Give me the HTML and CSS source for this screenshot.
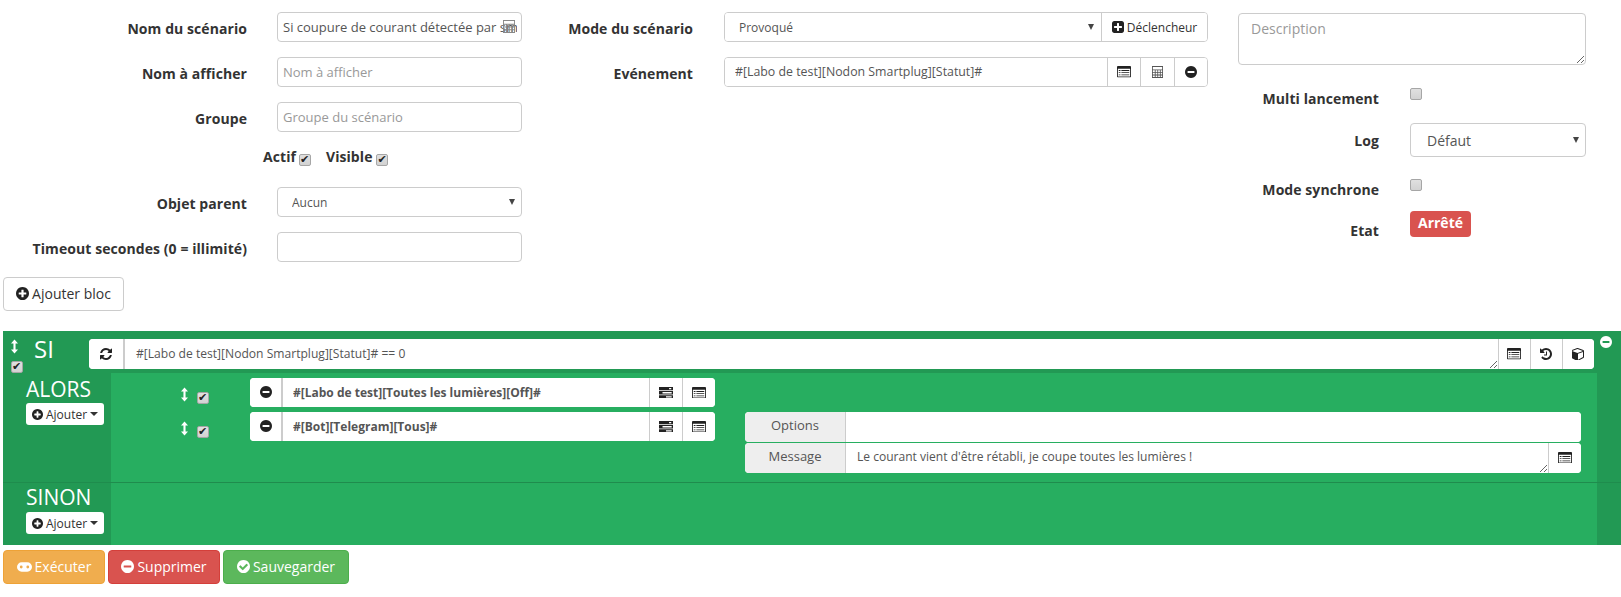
FILE: index.html
```html
<!DOCTYPE html>
<html lang="fr">
<head>
<meta charset="utf-8">
<title>Scénario</title>
<link rel="stylesheet" href="styles.css">
</head>
<body>
<svg class="sprite" xmlns="http://www.w3.org/2000/svg">
  <symbol id="i-plus" viewBox="128 128 1536 1536"><path d="M1344 960v-128q0-26-19-45t-45-19h-256v-256q0-26-19-45t-45-19h-128q-26 0-45 19t-19 45v256h-256q-26 0-45 19t-19 45v128q0 26 19 45t45 19h256v256q0 26 19 45t45 19h128q26 0 45-19t19-45v-256h256q26 0 45-19t19-45zm320-64q0 209-103 385.500t-279.500 279.500-385.500 103-385.500-103-279.500-279.500-103-385.500 103-385.500 279.500-279.500 385.500-103 385.500 103 279.500 279.500 103 385.500z"/></symbol>
  <symbol id="i-minus" viewBox="128 128 1536 1536"><path d="M1344 960v-128q0-26-19-45t-45-19h-768q-26 0-45 19t-19 45v128q0 26 19 45t45 19h768q26 0 45-19t19-45zm320-64q0 209-103 385.500t-279.500 279.500-385.500 103-385.500-103-279.500-279.500-103-385.500 103-385.500 279.500-279.500 385.500-103 385.500 103 279.500 279.500 103 385.500z"/></symbol>
  <symbol id="i-check" viewBox="128 128 1536 1536"><path d="M1412 734q0-28-18-46l-91-90q-19-19-45-19t-45 19l-408 407-226-226q-19-19-45-19t-45 19l-91 90q-18 18-18 46 0 27 18 45l362 362q19 19 45 19 27 0 46-19l543-543q18-18 18-45zm252 162q0 209-103 385.500t-279.500 279.500-385.500 103-385.500-103-279.500-279.500-103-385.500 103-385.500 279.500-279.500 385.500-103 385.500 103 279.500 279.500 103 385.500z"/></symbol>
  <symbol id="i-square" viewBox="128 128 1536 1536"><path d="M1408 960v-128q0-26-19-45t-45-19h-320v-320q0-26-19-45t-45-19h-128q-26 0-45 19t-19 45v320h-320q-26 0-45 19t-19 45v128q0 26 19 45t45 19h320v320q0 26 19 45t45 19h128q26 0 45-19t19-45v-320h320q26 0 45-19t19-45zm256-544v960q0 119-84.500 203.500t-203.500 84.500h-960q-119 0-203.500-84.500t-84.500-203.500v-960q0-119 84.500-203.500t203.500-84.500h960q119 0 203.500 84.500t84.500 203.500z"/></symbol>
  <symbol id="i-refresh" viewBox="128 128 1536 1536"><path d="M1639 1056q0 5-1 7-64 268-268 434.500t-478 166.500q-146 0-282.500-55t-243.500-157l-129 129q-19 19-45 19t-45-19-19-45v-448q0-26 19-45t45-19h448q26 0 45 19t19 45-19 45l-137 137q71 66 161 102t187 36q134 0 250-65t186-179q11-17 53-117 8-23 30-23h192q13 0 22.500 9.500t9.500 22.500zm25-800v448q0 26-19 45t-45 19h-448q-26 0-45-19t-19-45 19-45l138-138q-148-137-349-137-134 0-250 65t-186 179q-11 17-53 117-8 23-30 23h-199q-13 0-22.500-9.500t-9.500-22.500v-7q65-268 270-434.500t480-166.500q146 0 284 55.500t245 156.500l130-129q19-19 45-19t45 19 19 45z"/></symbol>
  <symbol id="i-history" viewBox="128 128 1536 1536"><path d="M1664 896q0 156-61 298t-164 245-245 164-298 61q-172 0-327-72.500t-264-204.500q-7-10-6.500-22.500t8.500-20.500l137-138q10-9 25-9 16 2 23 12 73 95 179 147t225 52q104 0 198.500-40.500t163.500-109.500 109.500-163.500 40.500-198.500-40.500-198.500-109.500-163.500-163.500-109.500-198.500-40.500q-98 0-188 35.500t-160 101.500l137 138q31 30 14 69-17 40-59 40h-448q-26 0-45-19t-19-45v-448q0-42 40-59 39-17 69 14l130 129q107-101 244.500-156.500t284.500-55.500q156 0 298 61t245 164 164 245 61 298zm-640-288v448q0 14-9 23t-23 9h-320q-14 0-23-9t-9-23v-64q0-14 9-23t23-9h224v-352q0-14 9-23t23-9h64q14 0 23 9t9 23z"/></symbol>
  <symbol id="i-cube" viewBox="128 128 1536 1536"><path d="M896 1629l640-349v-636l-640 233v752zm-64-865l698-254-698-254-698 254zm832-252v768q0 35-18 65t-49 47l-704 384q-28 16-61 16t-61-16l-704-384q-31-17-49-47t-18-65v-768q0-40 23-73t61-47l704-256q22-8 44-8t44 8l704 256q38 14 61 47t23 73z"/></symbol>
  <symbol id="i-arrows" viewBox="0 0 8 16"><path d="M4 0l4 4.500H5.200v7H8L4 16l-4-4.500h2.800v-7H0z"/></symbol>
  <symbol id="i-list" viewBox="0 0 16 13"><path fill-rule="evenodd" d="M1 0h14a1 1 0 0 1 1 1v11a1 1 0 0 1-1 1H1a1 1 0 0 1-1-1V1a1 1 0 0 1 1-1zM1 3v9h14V3zM2 4.500h2v1H2zM5 4.500h9v1H5zM2 7h2v1H2zM5 7h9v1H5zM2 9.500h2v1H2zM5 9.500h9v1H5z"/></symbol>
  <symbol id="i-tasks" viewBox="0 0 16 13"><path fill-rule="evenodd" d="M0 0h16v3.600H0zM11.500 1v1.400h2.500V1zM0 4.600h16v3.800H0zM4 5.700v1.600h10.500V5.700zM0 9.400h16V13H0zM8 10.500v1.400h6.500v-1.400z"/></symbol>
  <symbol id="i-calc" viewBox="0 0 13 14"><path fill-rule="evenodd" d="M0 0h13v14H0zM1 1v3h11V1zM1 5v2h2.300V5zM4.300 5v2h2V5zM7.300 5v2h2V5zM10.300 5v2H12V5zM1 8v2h2.300V8zM4.300 8v2h2V8zM7.300 8v2h2V8zM10.300 8v2H12V8zM1 11v2h2.300v-2zM4.300 11v2h2v-2zM7.300 11v2h2v-2zM10.300 11v2H12v-2z"/></symbol>
  <symbol id="i-game" viewBox="0 0 16 10"><path fill-rule="evenodd" d="M5 0h6a5 5 0 0 1 0 10H5A5 5 0 0 1 5 0zM4.500 3.500a1.500 1.500 0 1 0 0 3 1.500 1.500 0 0 0 0-3zM11.500 3.500a1.500 1.500 0 1 0 0 3 1.500 1.500 0 0 0 0-3z"/></symbol>
</svg>

<form class="top">
  <div class="col col-left">
    <div class="row">
      <label class="lbl lbl-left">Nom du scénario</label>
      <div class="field field-name">
        <input class="ctl" type="text" value="Si coupure de courant détectée par sms">
        <svg class="name-ic" viewBox="0 0 13 14"><use href="#i-calc"/></svg>
      </div>
    </div>
    <div class="row">
      <label class="lbl lbl-left">Nom à afficher</label>
      <div class="field"><input class="ctl" type="text" placeholder="Nom à afficher"></div>
    </div>
    <div class="row">
      <label class="lbl lbl-left">Groupe</label>
      <div class="field"><input class="ctl" type="text" placeholder="Groupe du scénario"></div>
    </div>
    <div class="row-checks">
      <label class="lbl-inline">Actif</label><input class="chk" type="checkbox" checked>
      <label class="lbl-inline lbl-visible">Visible</label><input class="chk" type="checkbox" checked>
    </div>
    <div class="row">
      <label class="lbl lbl-left">Objet parent</label>
      <div class="field select-wrap"><select class="ctl ctl-select small"><option>Aucun</option></select></div>
    </div>
    <div class="row">
      <label class="lbl lbl-left">Timeout secondes (0 = illimité)</label>
      <div class="field"><input class="ctl" type="text"></div>
    </div>
  </div>

  <div class="col col-mid">
    <div class="row">
      <label class="lbl lbl-mid">Mode du scénario</label>
      <div class="field-wide bordered">
        <div class="select-wrap grow"><select class="ctl-flat ctl-select small sel-mode"><option>Provoqué</option></select></div>
        <span class="addon addon-text"><svg class="ic"><use href="#i-square"/></svg> Déclencheur</span>
      </div>
    </div>
    <div class="row">
      <label class="lbl lbl-mid">Evénement</label>
      <div class="field-wide bordered">
        <input class="ctl-flat grow small-ev" type="text" value="#[Labo de test][Nodon Smartplug][Statut]#">
        <span class="addon"><svg class="ic ic-list"><use href="#i-list"/></svg></span>
        <span class="addon"><svg class="ic ic-calc"><use href="#i-calc"/></svg></span>
        <span class="addon"><svg class="ic"><use href="#i-minus"/></svg></span>
      </div>
    </div>
  </div>

  <div class="col col-right">
    <textarea class="ctl desc" placeholder="Description"></textarea>
    <div class="rrow rrow-multi">
      <label class="lbl lbl-right">Multi lancement</label>
      <input class="chk chk-r" type="checkbox">
    </div>
    <div class="rrow rrow-log">
      <label class="lbl lbl-right lbl-log">Log</label>
      <div class="select-wrap grow"><select class="ctl ctl-select log-select"><option>Défaut</option></select></div>
    </div>
    <div class="rrow rrow-sync">
      <label class="lbl lbl-right">Mode synchrone</label>
      <input class="chk chk-r" type="checkbox">
    </div>
    <div class="rrow rrow-etat">
      <label class="lbl lbl-right lbl-etat">Etat</label>
      <span class="badge">Arrêté</span>
    </div>
  </div>
</form>

<button class="btn btn-default btn-add" type="button"><svg class="ic"><use href="#i-plus"/></svg> Ajouter bloc</button>

<section class="block">
  <header class="block-head">
    <div class="handle">
      <svg class="ic-arrows"><use href="#i-arrows"/></svg>
      <input class="chk" type="checkbox" checked>
    </div>
    <span class="si">SI</span>
    <div class="igroup grow">
      <span class="addon addon-refresh"><svg class="ic"><use href="#i-refresh"/></svg></span>
      <textarea class="area area-si grow">#[Labo de test][Nodon Smartplug][Statut]# == 0</textarea>
      <span class="addon addon-si"><svg class="ic ic-list"><use href="#i-list"/></svg></span>
      <span class="addon addon-si"><svg class="ic"><use href="#i-history"/></svg></span>
      <span class="addon addon-si"><svg class="ic"><use href="#i-cube"/></svg></span>
    </div>
    <svg class="block-remove"><use href="#i-minus"/></svg>
  </header>

  <div class="section section-then">
    <div class="section-side">
      <div class="section-title">ALORS</div>
      <button class="btn-mini" type="button"><svg class="ic ic-mini"><use href="#i-plus"/></svg> Ajouter <i class="caret"></i></button>
    </div>
    <div class="section-main">
      <div class="action">
        <div class="drag"><svg class="ic-arrows"><use href="#i-arrows"/></svg><input class="chk" type="checkbox" checked></div>
        <div class="igroup action-group">
          <span class="addon addon-act"><svg class="ic"><use href="#i-minus"/></svg></span>
          <input class="flat-input grow" type="text" value="#[Labo de test][Toutes les lumières][Off]#">
          <span class="addon addon-act2"><svg class="ic ic-list"><use href="#i-tasks"/></svg></span>
          <span class="addon addon-act2"><svg class="ic ic-list"><use href="#i-list"/></svg></span>
        </div>
      </div>
      <div class="action">
        <div class="drag"><svg class="ic-arrows"><use href="#i-arrows"/></svg><input class="chk" type="checkbox" checked></div>
        <div class="igroup action-group">
          <span class="addon addon-act"><svg class="ic"><use href="#i-minus"/></svg></span>
          <input class="flat-input grow" type="text" value="#[Bot][Telegram][Tous]#">
          <span class="addon addon-act2"><svg class="ic ic-list"><use href="#i-tasks"/></svg></span>
          <span class="addon addon-act2"><svg class="ic ic-list"><use href="#i-list"/></svg></span>
        </div>
        <div class="options">
          <div class="igroup opt-line">
            <span class="opt-name">Options</span>
            <input class="opt-input grow" type="text">
          </div>
          <div class="igroup opt-line">
            <span class="opt-name">Message</span>
            <textarea class="area opt-area grow">Le courant vient d'être rétabli, je coupe toutes les lumières !</textarea>
            <span class="addon addon-act2"><svg class="ic ic-list"><use href="#i-list"/></svg></span>
          </div>
        </div>
      </div>
    </div>
  </div>

  <div class="section section-else">
    <div class="section-side">
      <div class="section-title">SINON</div>
      <button class="btn-mini" type="button"><svg class="ic ic-mini"><use href="#i-plus"/></svg> Ajouter <i class="caret"></i></button>
    </div>
    <div class="section-main"></div>
  </div>
</section>

<footer class="actions">
  <button class="btn btn-warning" type="button"><svg class="ic ic-game"><use href="#i-game"/></svg> Exécuter</button>
  <button class="btn btn-danger" type="button"><svg class="ic"><use href="#i-minus"/></svg> Supprimer</button>
  <button class="btn btn-success" type="button"><svg class="ic"><use href="#i-check"/></svg> Sauvegarder</button>
</footer>
</body>
</html>
```
FILE: styles.css
```css
* { box-sizing: border-box; }
html, body { margin: 0; padding: 0; }
body {
  width: 1621px;
  height: 597px;
  overflow: hidden;
  background: #fff;
  color: #333;
  font-family: "Open Sans", "Liberation Sans", sans-serif;
  font-size: 14px;
}
.sprite { display: none; }
.grow { flex: 1 1 0; min-width: 0; }

/* form */
.top { display: flex; height: 277px; padding-top: 12px; }
.col-left { width: 522px; }
.col-mid { width: 686px; }
.col-right { width: 348px; margin-left: 30px; padding-top: .500px; }
.row { display: flex; height: 30px; margin-bottom: 15px; }
.lbl { font-weight: 700; font-size: 14px; letter-spacing: .07px; color: #333; text-align: right; white-space: nowrap; }
.row .lbl { line-height: 34px; }
.lbl-left { width: 247px; margin-right: 30px; }
.lbl-mid { width: 171px; margin-right: 31px; }
.field { position: relative; width: 245px; height: 30px; }
.field-wide { display: flex; width: 484px; height: 30px; }
.bordered { border: 1px solid #ccc; border-radius: 4px; overflow: hidden; background: #fff; }

.ctl {
  display: block; width: 100%; height: 100%;
  border: 1px solid #ccc; border-radius: 4px;
  padding: 0 4px 0 5px; margin: 0;
  background: #fff; color: #555;
  font: 13px "Open Sans", sans-serif;
  outline: 0;
}
.ctl::placeholder, .desc::placeholder { color: #999; opacity: 1; }
.ctl-flat {
  display: block; width: 100%; height: 100%;
  border: 0; margin: 0; padding: 0 10px 1px;
  background: #fff; color: #555; outline: 0;
  font: 13px "Open Sans", sans-serif;
}
.small-ev { font-size: 12.350px; }
.ctl-select { appearance: none; -webkit-appearance: none; padding-left: 14px; padding-right: 20px; }
.sel-mode { padding-top: 1px; padding-bottom: 0; }
.small { font-size: 12px; }
.select-wrap { position: relative; }
.select-wrap::after {
  content: ""; position: absolute; right: 7px; top: 50%; margin-top: -3px;
  border-left: 3px solid transparent; border-right: 3px solid transparent; border-top: 6px solid #444;
}
.name-ic { position: absolute; right: 7px; top: 8px; width: 12px; height: 13px; fill: #888; }

.addon {
  display: flex; align-items: center; justify-content: center; flex: none;
  background: #fff; border-left: 1px solid #ccc; color: #333;
  font-size: 12px; width: 33.500px;
}
.addon-text { width: 106px; white-space: pre; }
.ic { width: 12px; height: 12px; fill: #222; flex: none; display: inline-block; vertical-align: -1px; }
.ic-list { width: 14px; height: 11.500px; }
.ic-calc { fill: #555; width: 11px; height: 12px; }

/* checks */
.row-checks { display: flex; align-items: flex-start; height: 25px; margin-bottom: 15px; padding-left: 263px; }
.lbl-inline { font-weight: 700; letter-spacing: .07px; line-height: 19px; margin-right: 3px; }
.lbl-visible { margin-left: 15px; margin-right: 4px; }
.chk {
  appearance: none; -webkit-appearance: none;
  position: relative;
  width: 12px; height: 12px; margin: 0; flex: none;
  border: 1px solid #a6a6a6; border-radius: 2px;
  background: linear-gradient(#e0e0e0, #d2d2d2);
}
.row-checks .chk { margin-top: 7px; }
.chk:checked::after {
  content: "✔"; position: absolute; left: 0; top: -2px;
  font: 11px/13px "DejaVu Sans", sans-serif; color: #222;
}

/* right */
.desc { height: 52.500px; padding: 5px 12px; font-size: 14px; resize: vertical; }
.rrow { display: flex; }
.lbl-right { width: 141px; margin-right: 31px; line-height: 21px; }
.rrow-multi { margin-top: 23px; height: 20px; }
.rrow-log { margin-top: 15px; height: 33.500px; }
.rrow .lbl-log { line-height: 35.500px; }
.log-select { font-size: 14px; padding-left: 16px; padding-top: 2px; }
.rrow-sync { margin-top: 22.500px; height: 20px; }
.rrow-etat { margin-top: 12px; height: 40px; }
.rrow .lbl-etat { line-height: 40px; }
.badge {
  height: 26px; width: 61px; text-align: center; line-height: 24px;
  background: #d9534f; color: #fff; font-weight: 700; font-size: 14px; border-radius: 4px;
}

/* buttons */
.btn {
  display: inline-flex; align-items: center; justify-content: center;
  height: 34px; margin: 0; padding: 0 0 1px; gap: 3px;
  border: 1px solid #ccc; border-radius: 4px;
  font: 14px "Open Sans", sans-serif; cursor: pointer;
}
.btn .ic { width: 13px; height: 13px; }
.btn-default { background: #fff; color: #333; }
.btn-add { display: flex; width: 121px; margin-left: 3px; }
.btn-warning { width: 102px; background: #f0ad4e; border-color: #eea236; color: #fff; }
.btn-danger { width: 112px; background: #d9534f; border-color: #d43f3a; color: #fff; }
.btn-success { width: 126px; background: #5cb85c; border-color: #4cae4c; color: #fff; }
.btn-warning .ic, .btn-danger .ic, .btn-success .ic { fill: #fff; }
.btn .ic-game { width: 15px; height: 10px; }

/* block */
.block { margin: 20px 0 0 3px; background: #229954; color: #fff; height: 214px; }
.block-head { display: flex; height: 42px; padding-top: 8px; padding-right: 9px; }
.handle { width: 31px; padding-left: 8px; display: flex; flex-direction: column; }
.ic-arrows { width: 7px; height: 15px; fill: #fff; flex: none; display: block; }
.handle .chk { margin-top: 7px; }
.si { width: 55px; font-size: 24px; line-height: 20px; }
.igroup { display: flex; background: #fff; border-radius: 4px; overflow: hidden; color: #555; }
.block-head .igroup { height: 30px; }
.addon-refresh { width: 36px; border-left: 0; border-right: 2px solid #ccc; }
.addon-si { width: 32px; }
.area {
  display: block; height: 100%; border: 0; margin: 0; outline: 0; padding: 4px 10px;
  font: 12.100px/20px "Open Sans", sans-serif; color: #555; background: #fff; resize: vertical;
}
.area-si { padding: 5px 11px 3px; }
.block-remove { width: 12px; height: 12px; fill: #fff; margin: -3px 0 0 6.500px; flex: none; }

.section { display: flex; }
.section-then { height: 110px; border-bottom: 1px solid #1f8c4d; }
.section-else { height: 62px; }
.section-side { width: 108px; padding-left: 23px; flex: none; }
.section-main { flex: 1; background: #27ae60; margin-right: 24px; padding-top: 4.500px; }
.section-then .section-main { height: 109px; }
.section-title { font-size: 21px; line-height: 28px; margin-top: 2px; }
.btn-mini {
  display: flex; align-items: center; gap: 3px;
  width: 78px; height: 22px; padding: 0 0 0 6px; margin: 0;
  border: 0; border-radius: 3px; background: #fff; color: #333;
  font: 12px "Open Sans", sans-serif;
}
.ic-mini { width: 11px; height: 11px; }
.caret { border-left: 4px solid transparent; border-right: 4px solid transparent; border-top: 4px solid #333; }
.section-else .section-title { margin-top: 0; margin-bottom: 1px; }

.action { display: flex; align-items: flex-start; height: 34px; }
.drag { width: 139px; padding: 9px 0 0 70px; display: flex; align-items: flex-start; }
.drag .chk { margin: 5px 0 0 9px; }
.action-group { width: 465px; height: 29.500px; flex: none; }
.addon-act { width: 33px; border-left: 0; border-right: 2px solid #ccc; }
.addon-act2 { width: 33px; }
.flat-input { border: 0; outline: 0; margin: 0; padding: 0 10px; font: 700 12px "Open Sans", sans-serif; color: #555; background: #fff; }

.options { margin-left: 30px; flex: 1; padding-right: 16px; }
.opt-line { height: 30px; margin-bottom: 1px; }
.opt-name { width: 101px; flex: none; display: flex; align-items: center; justify-content: center; padding-bottom: 3px; background: #eee; border-right: 1px solid #ccc; font-size: 13px; color: #555; }
.opt-input { border: 0; outline: 0; margin: 0; background: #fff; }
.opt-area { padding: 4px 11px; font-size: 12.050px; }

.actions { display: flex; gap: 3px; margin: 5px 0 0 3px; }
```
